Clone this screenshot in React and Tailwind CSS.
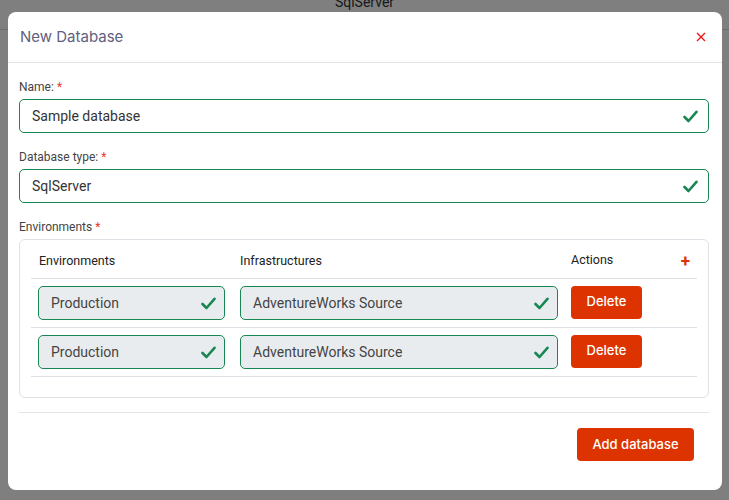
import React from 'react';

const Check = ({ className = '' }) => (
  <svg className={className} width="15" height="13" viewBox="0 0 15 13" fill="none">
    <path d="M1.5 7 L5.5 11 L13.5 1.8" stroke="#198754" strokeWidth="2.6" strokeLinecap="round" strokeLinejoin="round" />
  </svg>
);

const Label = ({ children }) => (
  <div className="text-[12px] leading-[18px] text-[#444] mb-[3px]">
    {children} <span className="text-[#e53935]">*</span>
  </div>
);

const ValidInput = ({ value }) => (
  <div className="h-[34px] flex items-center justify-between pl-[12px] pr-[10px] border border-[#198754] rounded-[5px] text-[14px] text-[#333]">
    <span>{value}</span>
    <Check />
  </div>
);

const CellInput = ({ value, width }) => (
  <div className={`${width} h-[34px] flex items-center justify-between pl-[12px] pr-[8px] bg-[#e9ecef] border border-[#198754] rounded-[5px] text-[14px] text-[#444]`}>
    <span>{value}</span>
    <Check />
  </div>
);

const rows = [
  { env: 'Production', infra: 'AdventureWorks Source' },
  { env: 'Production', infra: 'AdventureWorks Source' },
];

export default function App() {
  return (
    <div className="relative h-[500px] overflow-hidden bg-white" style={{ fontFamily: 'Roboto, "Liberation Sans", sans-serif' }}>
      <div className="h-[30px] border-b border-[#ddd] flex justify-center">
        <span className="-mt-[8px] text-[14px] text-[#333]">SqlServer</span>
      </div>

      <div className="absolute inset-0 bg-black/50">
        <div className="mt-[12px] ml-[8px] w-[714px] h-[478px] bg-white rounded-lg flex flex-col">
          <div className="h-[51px] flex items-center justify-between pl-[12px] pr-[16px] border-b border-[#e3e3ea]">
            <h2 className="text-[15px] text-[#62607e]" style={{ fontFamily: 'Inter, sans-serif' }}>New Database</h2>
            <svg width="10" height="10" viewBox="0 0 10 10">
              <path d="M1 1 L9 9 M9 1 L1 9" stroke="#f01818" strokeWidth="1.4" />
            </svg>
          </div>

          <div className="pl-[11px] pr-[13px] pt-[15px]">
            <Label>Name:</Label>
            <ValidInput value="Sample database" />

            <div className="mt-[15px]">
              <Label>Database type:</Label>
              <ValidInput value="SqlServer" />
            </div>

            <div className="mt-[15px]">
              <Label>Environments</Label>
              <div className="border border-[#dee2e6] rounded-md px-[11px] pt-[11px] pb-[20px]">
                <div className="h-[28px] flex border-b border-[#dee2e6] text-[12.5px] text-[#222]">
                  <div className="w-[201px] pl-[8px] pt-[1px]">Environments</div>
                  <div className="w-[332px] pl-[8px] pt-[1px]">Infrastructures</div>
                  <div className="flex-1 pl-[7px] flex justify-between pr-[7px]">
                    <span>Actions</span>
                    <span className="text-[#dd3300] text-[17px] leading-[18px] font-bold mt-[1px]">+</span>
                  </div>
                </div>
                {rows.map((r, i) => (
                  <div key={i} className="flex items-center h-[49px] border-b border-[#dee2e6]">
                    <div className="w-[201px] pl-[7px]">
                      <CellInput value={r.env} width="w-[187px]" />
                    </div>
                    <div className="w-[332px] pl-[8px]">
                      <CellInput value={r.infra} width="w-[318px]" />
                    </div>
                    <div className="flex-1 pl-[7px]">
                      <button className="w-[71px] h-[33px] -mt-[2px] bg-[#dd3300] text-white rounded-[4px] text-[13px] font-medium" style={{ fontFamily: 'Inter, sans-serif' }}>
                        Delete
                      </button>
                    </div>
                  </div>
                ))}
              </div>
            </div>
          </div>

          <div className="ml-[11px] mr-[13px] mt-[14px] border-t border-[#e3e3ea] pt-[15px] pr-[15px] flex justify-end">
            <button className="w-[117px] h-[33px] bg-[#dd3300] text-white rounded-[4px] text-[13px] font-medium" style={{ fontFamily: 'Inter, sans-serif' }}>
              Add database
            </button>
          </div>
        </div>
      </div>
    </div>
  );
}
